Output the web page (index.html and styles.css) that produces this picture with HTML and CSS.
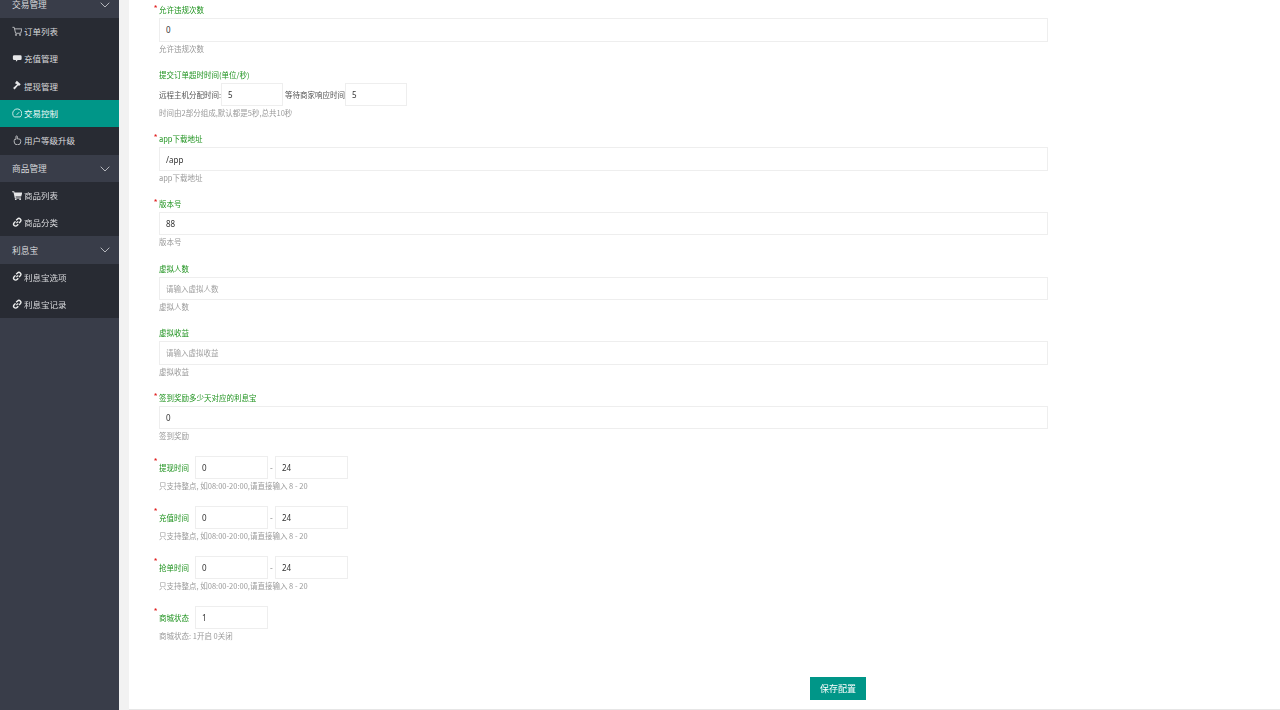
FILE: index.html
```html
<!DOCTYPE html>
<html lang="zh-CN">
<head>
<meta charset="utf-8">
<title>交易控制</title>
<link rel="stylesheet" href="styles.css">
</head>
<body>
<aside class="sidebar">
  <nav class="menu">
    <div class="group">交易管理<svg class="chev" viewBox="0 0 10 6"><path d="M.7.7 5 5 9.3.7"/></svg></div>
    <a class="item"><svg class="ico line" viewBox="0 0 12 12"><path d="M.5 1.500h2l1.600 6.800h5.800l1.400-5H3"/><circle cx="4.600" cy="10.200" r=".7"/><circle cx="9.200" cy="10.200" r=".7"/></svg>订单列表</a>
    <a class="item"><svg class="ico fill" viewBox="0 0 12 12"><path d="M2.500 2.500h7a1.500 1.500 0 0 1 1.500 1.500v2.500a1.500 1.500 0 0 1-1.500 1.500H6.500L4.500 10V8h-2A1.500 1.500 0 0 1 1 6.500V4a1.500 1.500 0 0 1 1.500-1.500z"/></svg>充值管理</a>
    <a class="item"><svg class="ico fill" viewBox="0 0 12 12"><path d="M5.500.8 10 4.800 8 6.800 7.100 6 3 10.800 1.200 9.200 5.700 5 4.800 4.200 4.500 4.500 3.500 3.500z"/></svg>提现管理</a>
    <a class="item on"><svg class="ico line" viewBox="0 0 12 12"><path d="M2.600 10.200a5.200 5.200 0 1 1 6.800 0z"/><path d="M5.300 7.800 8.200 4.800"/></svg>交易控制</a>
    <a class="item"><svg class="ico line" viewBox="0 0 12 12"><path d="M4.500 5V1.800a.8.800 0 0 1 1.600 0V4.500h1.600a2.200 2.200 0 0 1 2.300 2.200v1a3.500 3.500 0 0 1-3.500 3.500h-.5A3.500 3.500 0 0 1 2.500 8V6.500A1.500 1.500 0 0 1 4.500 5z"/></svg>用户等级升级</a>
    <div class="group">商品管理<svg class="chev" viewBox="0 0 10 6"><path d="M.7.7 5 5 9.300.7"/></svg></div>
    <a class="item"><svg class="ico fill" viewBox="0 0 12 12"><path d="M.2 1.500h2.300l.4 1.300H11.800L10.500 7.500H4.100l.2 1h6v1.100H3.300L1.700 2.600H.2z"/><circle cx="4.300" cy="10.700" r="1"/><circle cx="9.300" cy="10.700" r="1"/></svg>商品列表</a>
    <a class="item"><svg class="ico link" viewBox="0 0 12 12"><path d="M5 7 7 5M4.800 3.800 6.300 2.300a2.200 2.200 0 0 1 3.200 3.100L8 7M7.200 8.200 5.700 9.700a2.200 2.200 0 0 1-3.200-3.100L4 5"/></svg>商品分类</a>
    <div class="group">利息宝<svg class="chev" viewBox="0 0 10 6"><path d="M.7.7 5 5 9.300.7"/></svg></div>
    <a class="item"><svg class="ico link" viewBox="0 0 12 12"><path d="M5 7 7 5M4.800 3.800 6.300 2.300a2.200 2.200 0 0 1 3.200 3.100L8 7M7.200 8.200 5.700 9.700a2.200 2.200 0 0 1-3.200-3.100L4 5"/></svg>利息宝选项</a>
    <a class="item"><svg class="ico link" viewBox="0 0 12 12"><path d="M5 7 7 5M4.800 3.800 6.300 2.300a2.200 2.200 0 0 1 3.200 3.100L8 7M7.200 8.200 5.700 9.700a2.200 2.200 0 0 1-3.200-3.100L4 5"/></svg>利息宝记录</a>
  </nav>
</aside>
<main class="content">
  <form class="form">
    <div class="field">
      <label class="lbl req">允许违规次数</label>
      <input class="inp" value="0">
      <p class="help">允许违规次数</p>
    </div>
    <div class="field">
      <label class="lbl">提交订单超时时间(单位/秒)</label>
      <div class="row">
        <span class="txt">远程主机分配时间:</span><input class="inp n1" value="5">
        <span class="txt t2">等待商家响应时间</span><input class="inp n1" value="5">
      </div>
      <p class="help">时间由2部分组成,默认都是5秒,总共10秒</p>
    </div>
    <div class="field">
      <label class="lbl req">app下载地址</label>
      <input class="inp" value="/app">
      <p class="help">app下载地址</p>
    </div>
    <div class="field">
      <label class="lbl req">版本号</label>
      <input class="inp" value="88">
      <p class="help">版本号</p>
    </div>
    <div class="field">
      <label class="lbl">虚拟人数</label>
      <input class="inp" placeholder="请输入虚拟人数">
      <p class="help">虚拟人数</p>
    </div>
    <div class="field">
      <label class="lbl">虚拟收益</label>
      <input class="inp" placeholder="请输入虚拟收益">
      <p class="help">虚拟收益</p>
    </div>
    <div class="field last">
      <label class="lbl req">签到奖励多少天对应的利息宝</label>
      <input class="inp" value="0">
      <p class="help">签到奖励</p>
    </div>
    <div class="field inline">
      <div class="row">
        <label class="lbl req side">提现时间</label><input class="inp n2" value="0"><span class="dash">-</span><input class="inp n2" value="24">
      </div>
      <p class="help">只支持整点, 如08:00-20:00,请直接输入 8 - 20</p>
    </div>
    <div class="field inline">
      <div class="row">
        <label class="lbl req side">充值时间</label><input class="inp n2" value="0"><span class="dash">-</span><input class="inp n2" value="24">
      </div>
      <p class="help">只支持整点, 如08:00-20:00,请直接输入 8 - 20</p>
    </div>
    <div class="field inline">
      <div class="row">
        <label class="lbl req side">抢单时间</label><input class="inp n2" value="0"><span class="dash">-</span><input class="inp n2" value="24">
      </div>
      <p class="help">只支持整点, 如08:00-20:00,请直接输入 8 - 20</p>
    </div>
    <div class="field inline">
      <div class="row">
        <label class="lbl req side">商城状态</label><input class="inp n2" value="1">
      </div>
      <p class="help">商城状态: 1开启 0关闭</p>
    </div>
    <div class="actions"><button class="btn" type="button">保存配置</button></div>
  </form>
</main>
</body>
</html>
```
FILE: styles.css
```css
* { box-sizing: border-box; }
html, body { margin: 0; height: 710px; overflow: hidden; }
body {
  display: flex;
  background: #f2f2f2;
  font-family: "Noto Sans CJK SC", "Noto Sans", sans-serif;
}
.menu, .form { filter: blur(0.3px); }
.sidebar {
  width: 119px;
  height: 710px;
  flex: none;
  background: #393d49;
  overflow: hidden;
}
.menu { margin-top: -9.2px; }
.group, .item {
  display: flex;
  align-items: center;
  height: 27.3px;
  white-space: nowrap;
}
.group {
  padding: 1px 0 0 12px;
  font-size: 8.700px;
  color: #d8d9dc;
  background: #393d49;
  position: relative;
}
.item {
  padding: 0 0 1.500px 11.500px;
  font-size: 8.500px;
  color: #d8d9dc;
  background: #282b33;
}
.item.on { background: #009688; color: #f2faf9; }
.chev {
  position: absolute;
  left: 100px;
  top: 11px;
  width: 10px;
  height: 6px;
  fill: none;
  stroke: #b5b7bc;
  stroke-width: 1;
}
.ico { width: 10.500px; height: 10.500px; margin-right: 2px; flex: none; }
.ico.line { fill: none; stroke: #c8c9cc; stroke-width: 1; }
.ico.fill { fill: #e6e7e9; }
.ico.link { fill: none; stroke: #eceded; stroke-width: 1.600; }
.item.on .ico.line { stroke: #e8f5f3; }

.content {
  margin-left: 10px;
  flex: 1;
  height: 710px;
  background: #fff;
  border-bottom: 1px solid #e6e6e6;
  overflow: hidden;
}
.form { padding: 4.300px 0 0 30px; }
.field { margin-bottom: 14.300px; }
.field.last { margin-bottom: 13.900px; }
.field.inline { margin-bottom: 13.700px; }
.lbl {
  display: block;
  height: 12px;
  line-height: 12px;
  margin-bottom: 2px;
  font-size: 7.500px;
  color: #1f931f;
  position: relative;
  white-space: nowrap;
}
.lbl.req::before {
  content: "*";
  position: absolute;
  left: -5.500px;
  top: 0;
  color: #e02020;
  font-size: 9px;
  line-height: 9px;
}
.lbl.side {
  width: 36px;
  flex: none;
  margin: 0;
  height: 23.300px;
  line-height: 24px;
}
.lbl.side::before { top: 1px; }
.inp {
  display: block;
  width: 889px;
  height: 23.300px;
  padding: 0 6px;
  border: 1px solid #eee;
  background: #fff;
  outline: none;
  font: 8px "Noto Sans", "Noto Sans CJK SC", sans-serif;
  color: #333;
}
.inp::placeholder { color: #a0a0a0; font-size: 7.500px; }
.inp.n1 { width: 62px; }
.inp.n2 { width: 73px; }
.row { display: flex; align-items: center; }
.txt { font-size: 7.500px; color: #555; white-space: nowrap; width: 62px; }
.txt.t2 { padding-left: 2px; }
.dash { width: 7px; text-align: center; font-size: 8px; color: #777; }
.help {
  margin: 1px 0 0;
  height: 12px;
  line-height: 12px;
  font-size: 7.500px;
  color: #999;
  white-space: nowrap;
}
.actions {
  margin-top: 34.700px;
  margin-left: 651px;
}
.btn {
  display: block;
  width: 56px;
  height: 23px;
  padding: 0;
  border: 0;
  background: #009688;
  color: #fff;
  font: 9px "Noto Sans CJK SC", sans-serif;
}
```
